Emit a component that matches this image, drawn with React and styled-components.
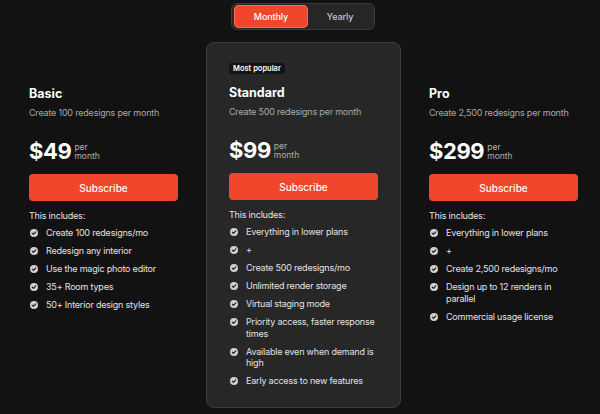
import React, { useState } from 'react';
import styled, { createGlobalStyle } from 'styled-components';

const GlobalStyle = createGlobalStyle`
  html, body {
    margin: 0;
    padding: 0;
    background: #121212;
  }
  body {
    font-family: Inter, "Noto Sans", "Liberation Sans", sans-serif;
    color: #f2f2f2;
    -webkit-font-smoothing: antialiased;
  }
`;

const Page = styled.div`
  width: 600px;
  height: 414px;
  overflow: hidden;
  background: #121212;
  display: flex;
  flex-direction: column;
  align-items: center;
`;

const Toggle = styled.div`
  margin: 3px 0 0 6px;
  display: flex;
  padding: 1px 2px;
  width: 138px;
  height: 23px;
  background: #262626;
  border: 1px solid #3a3a3a;
  border-radius: 6px;
`;

const ToggleButton = styled.button`
  flex: ${(p) => p.$grow};
  border: 0;
  border-radius: 5px;
  padding: 0;
  font-family: inherit;
  font-size: 9px;
  font-weight: 500;
  letter-spacing: -0.1px;
  cursor: pointer;
  color: ${(p) => (p.$active ? '#ffffff' : '#c8c8c8')};
  background: ${(p) => (p.$active ? '#f0462b' : 'transparent')};
  box-shadow: ${(p) => (p.$active ? '0 0 0 1px #ff6a4c inset' : 'none')};
`;

const Plans = styled.div`
  align-self: flex-start;
  margin-top: 12px;
  margin-left: 6px;
  display: flex;
  gap: 5px;
  align-items: flex-start;
`;

const Plan = styled.div`
  width: 195px;
  height: 366px;
  box-sizing: border-box;
  padding: ${(p) => (p.$featured ? '20px' : '21px')} 23px 0 22px;
  border-radius: 8px;
  background: ${(p) => (p.$featured ? '#272727' : 'transparent')};
  border: 1px solid ${(p) => (p.$featured ? '#3d3d3d' : 'transparent')};
  display: flex;
  flex-direction: column;
`;

const Badge = styled.span`
  align-self: flex-start;
  visibility: ${(p) => (p.$show ? 'visible' : 'hidden')};
  background: #141414;
  color: #ffffff;
  font-size: 7.5px;
  font-weight: 600;
  line-height: 11px;
  padding: 0 4px;
  border-radius: 2px;
`;

const Title = styled.h2`
  margin: 10px 0 0;
  font-size: 12.5px;
  font-weight: 700;
  line-height: 18px;
  color: #ffffff;
`;

const Blurb = styled.p`
  margin: 3px 0 0;
  font-size: 9px;
  letter-spacing: -0.2px;
  line-height: 14px;
  color: #a9a9a9;
`;

const PriceRow = styled.div`
  margin-top: 16px;
  display: flex;
  align-items: center;
  gap: 3px;
`;

const Amount = styled.span`
  font-size: 22px;
  font-weight: 700;
  line-height: 30px;
  color: #ffffff;
  letter-spacing: -0.4px;
`;

const Per = styled.span`
  font-size: 8.5px;
  line-height: 9px;
  color: #b0b0b0;
  margin-top: 2px;
`;

const Subscribe = styled.button`
  margin-top: 8px;
  width: 149px;
  height: 27px;
  border: 0;
  border-radius: 4px;
  background: #f0462b;
  color: #ffffff;
  font-family: inherit;
  font-size: 10px;
  font-weight: 500;
  cursor: pointer;
`;

const Includes = styled.p`
  margin: 8px 0 0;
  font-size: 9px;
  letter-spacing: -0.2px;
  line-height: 14px;
  color: #e4e4e4;
`;

const Features = styled.ul`
  list-style: none;
  margin: 3px 0 0;
  padding: 0;
  display: flex;
  flex-direction: column;
  gap: 5.5px;
`;

const Feature = styled.li`
  display: flex;
  gap: 8px;
  font-size: 9px;
  letter-spacing: -0.2px;
  line-height: 11.5px;
  color: #e2e2e2;
  padding-top: 1px;

  svg {
    flex: none;
    margin-top: 2px;
    margin-left: 1px;
  }
`;

const Check = () => (
  <svg width="8" height="8" viewBox="0 0 16 16">
    <circle cx="8" cy="8" r="8" fill="#d0d0d0" />
    <path d="M4.4 8.2l2.5 2.4 4.8-5" fill="none" stroke="#1a1a1a" strokeWidth="2.2" strokeLinecap="round" strokeLinejoin="round" />
  </svg>
);

const plans = [
  {
    name: 'Basic',
    blurb: 'Create 100 redesigns per month',
    price: '$49',
    features: [
      'Create 100 redesigns/mo',
      'Redesign any interior',
      'Use the magic photo editor',
      '35+ Room types',
      '50+ Interior design styles',
    ],
  },
  {
    name: 'Standard',
    blurb: 'Create 500 redesigns per month',
    price: '$99',
    featured: true,
    features: [
      'Everything in lower plans',
      '+',
      'Create 500 redesigns/mo',
      'Unlimited render storage',
      'Virtual staging mode',
      'Priority access, faster response times',
      'Available even when demand is high',
      'Early access to new features',
    ],
  },
  {
    name: 'Pro',
    blurb: 'Create 2,500 redesigns per month',
    price: '$299',
    features: [
      'Everything in lower plans',
      '+',
      'Create 2,500 redesigns/mo',
      'Design up to 12 renders in parallel',
      'Commercial usage license',
    ],
  },
];

export default function App() {
  const [period, setPeriod] = useState('monthly');

  return (
    <>
      <GlobalStyle />
      <Page>
        <Toggle>
          <ToggleButton $grow={74} $active={period === 'monthly'} onClick={() => setPeriod('monthly')}>
            Monthly
          </ToggleButton>
          <ToggleButton $grow={64} $active={period === 'yearly'} onClick={() => setPeriod('yearly')}>
            Yearly
          </ToggleButton>
        </Toggle>
        <Plans>
          {plans.map((plan) => (
            <Plan key={plan.name} $featured={plan.featured}>
              <Badge $show={plan.featured}>Most popular</Badge>
              <Title>{plan.name}</Title>
              <Blurb>{plan.blurb}</Blurb>
              <PriceRow>
                <Amount>{plan.price}</Amount>
                <Per>
                  per
                  <br />
                  month
                </Per>
              </PriceRow>
              <Subscribe>Subscribe</Subscribe>
              <Includes>This includes:</Includes>
              <Features>
                {plan.features.map((f) => (
                  <Feature key={f}>
                    <Check />
                    <span>{f}</span>
                  </Feature>
                ))}
              </Features>
            </Plan>
          ))}
        </Plans>
      </Page>
    </>
  );
}
